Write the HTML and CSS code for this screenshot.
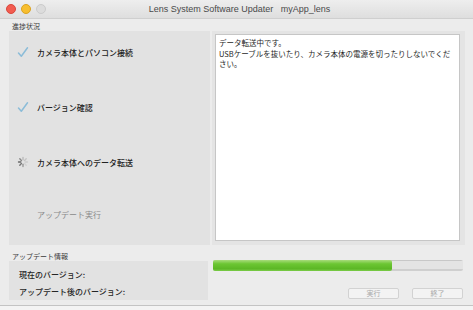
FILE: index.html
```html
<!DOCTYPE html>
<html lang="ja">
<head>
    <meta charset="UTF-8">
    <title>Lens System Software Updater</title>
    <link rel="stylesheet" href="styles.css">
</head>
<body>
    <div class="window">
        <!-- Title bar -->
        <div class="titlebar">
            <div class="lights">
                <span class="light red"></span>
                <span class="light yellow"></span>
                <span class="light off"></span>
            </div>
            <div class="title">Lens System Software Updater&nbsp;&nbsp;&nbsp;myApp_lens</div>
        </div>

        <div class="main">
            <div class="group-label">進捗状況</div>

            <div class="top">
                <!-- Steps -->
                <div class="steps">
                    <div class="step">
                        <svg class="icon" width="12" height="12" viewBox="0 0 12 12">
                            <path d="M1.5 7 L4.3 10.2 L10.5 1.8" fill="none" stroke="#8bbcd8" stroke-width="1.5" stroke-linecap="round" stroke-linejoin="round"/>
                        </svg>
                        <span>カメラ本体とパソコン接続</span>
                    </div>
                    <div class="step">
                        <svg class="icon" width="12" height="12" viewBox="0 0 12 12">
                            <path d="M1.5 7 L4.3 10.2 L10.5 1.8" fill="none" stroke="#8bbcd8" stroke-width="1.5" stroke-linecap="round" stroke-linejoin="round"/>
                        </svg>
                        <span>バージョン確認</span>
                    </div>
                    <div class="step">
                        <svg class="icon" width="12" height="12" viewBox="0 0 12 12">
                            <g stroke-width="1.4" stroke-linecap="round">
                                <line x1="6" y1="1.5" x2="6" y2="3.8" stroke="#bbb"/>
                                <line x1="9.2" y1="2.8" x2="7.6" y2="4.4" stroke="#c4c4c4"/>
                                <line x1="10.5" y1="6" x2="8.2" y2="6" stroke="#ccc"/>
                                <line x1="9.2" y1="9.2" x2="7.6" y2="7.6" stroke="#d2d2d2"/>
                                <line x1="6" y1="10.5" x2="6" y2="8.2" stroke="#999"/>
                                <line x1="2.8" y1="9.2" x2="4.4" y2="7.6" stroke="#777"/>
                                <line x1="1.5" y1="6" x2="3.8" y2="6" stroke="#666"/>
                                <line x1="2.8" y1="2.8" x2="4.4" y2="4.4" stroke="#888"/>
                            </g>
                        </svg>
                        <span>カメラ本体へのデータ転送</span>
                    </div>
                    <div class="step pending">
                        <span class="icon"></span>
                        <span>アップデート実行</span>
                    </div>
                </div>

                <!-- Message box -->
                <div class="log-wrap">
                    <div class="log">データ転送中です。<br>USBケーブルを抜いたり、カメラ本体の電源を切ったりしないでください。</div>
                </div>
            </div>

            <div class="bottom">
                <div class="info">
                    <div class="group-label">アップデート情報</div>
                    <div class="info-box">
                        <div>現在のバージョン:</div>
                        <div>アップデート後のバージョン:</div>
                    </div>
                </div>
                <div class="actions">
                    <div class="progress"><div class="progress-fill" style="width: 71.5%;"></div></div>
                    <div class="buttons">
                        <button type="button" disabled>実行</button>
                        <button type="button" disabled>終了</button>
                    </div>
                </div>
            </div>
        </div>
    </div>
</body>
</html>
```

FILE: styles.css
```css
/* Basic Styling */
body {
    margin: 0;
    background-color: #f4f4f4;
    font-family: "Noto Sans CJK JP", "Liberation Sans", sans-serif;
    color: #222;
}
.window {
    width: 473px;
    height: 305px;
    background-color: #ececec;
    border-bottom: 1px solid #c4c4c4;
}
/* Title bar */
.titlebar {
    height: 18px;
    display: flex;
    align-items: center;
    background: linear-gradient(#eeeeee, #dedede);
    border-bottom: 1px solid #cfcfcf;
}
.lights {
    display: flex;
    gap: 5px;
    padding-left: 6px;
}
.light {
    width: 8px;
    height: 8px;
    border-radius: 50%;
}
.light.red {
    background-color: #f25c50;
    border: 0.5px solid #d9473c;
}
.light.yellow {
    background-color: #f7be2f;
    border: 0.5px solid #dba220;
}
.light.off {
    background-color: #dcdcdc;
    border: 0.5px solid #cbcbcb;
}
.title {
    flex: 1;
    text-align: center;
    font-family: "Liberation Sans", Arial, sans-serif;
    font-size: 9px;
    color: #4a4a4a;
    margin-right: 40px;
}
/* Main area */
.main {
    padding: 2px 8px 0 9px;
}
.group-label {
    font-size: 7px;
    color: #3a3a3a;
    height: 10px;
    line-height: 10px;
    padding-left: 3px;
}
.top {
    display: flex;
    gap: 2px;
    height: 214px;
}
.steps {
    width: 201px;
    background-color: #e2e2e2;
    padding: 13px 0 0 8px;
    box-sizing: border-box;
    display: flex;
    flex-direction: column;
    gap: 39px;
}
.step {
    display: flex;
    align-items: center;
    gap: 8px;
    height: 16px;
    font-size: 8px;
    font-weight: 500;
    color: #222;
}
.step .icon {
    width: 12px;
    height: 12px;
    flex: none;
}
.step.pending {
    color: #8a8a8a;
    font-weight: normal;
    margin-top: -3px;
}
.log-wrap {
    flex: 1;
    background-color: #e4e4e4;
    padding: 3px 5px 4px 3px;
}
.log {
    height: 100%;
    box-sizing: border-box;
    background-color: #fff;
    border: 1px solid #c6c6c6;
    padding: 3px 6px 0 3px;
    font-size: 7.5px;
    line-height: 10.5px;
    color: #1e1e1e;
}
/* Bottom area */
.bottom {
    display: flex;
    gap: 5px;
    margin-top: 6px;
}
.info {
    width: 199px;
}
.info-box {
    background-color: #e2e2e2;
    height: 39px;
    padding: 5px 0 0 10px;
    box-sizing: border-box;
    font-size: 8px;
    font-weight: 500;
    line-height: 17px;
    color: #262626;
}
.actions {
    flex: 1;
    padding-top: 9px;
    padding-right: 2px;
}
.progress {
    height: 11px;
    background: linear-gradient(#c8c8c8 0, #c8c8c8 1px, #e4e4e4 1px, #e4e4e4 9px, #cfcfcf 9px);
    border-radius: 2px;
}
.progress-fill {
    height: 100%;
    background: linear-gradient(#a8dc7c, #6cc633 35%, #5cb726 80%, #7ccc4a);
    border-radius: 2px;
}
.buttons {
    display: flex;
    justify-content: flex-end;
    gap: 13px;
    margin-top: 17px;
}
button {
    width: 51px;
    height: 11px;
    padding: 0;
    background-color: #f3f3f3;
    border: 1px solid #d2d2d2;
    border-radius: 2px;
    font-family: "Noto Sans CJK JP", sans-serif;
    font-size: 7px;
    line-height: 9px;
    color: #a8a8a8;
}
```
